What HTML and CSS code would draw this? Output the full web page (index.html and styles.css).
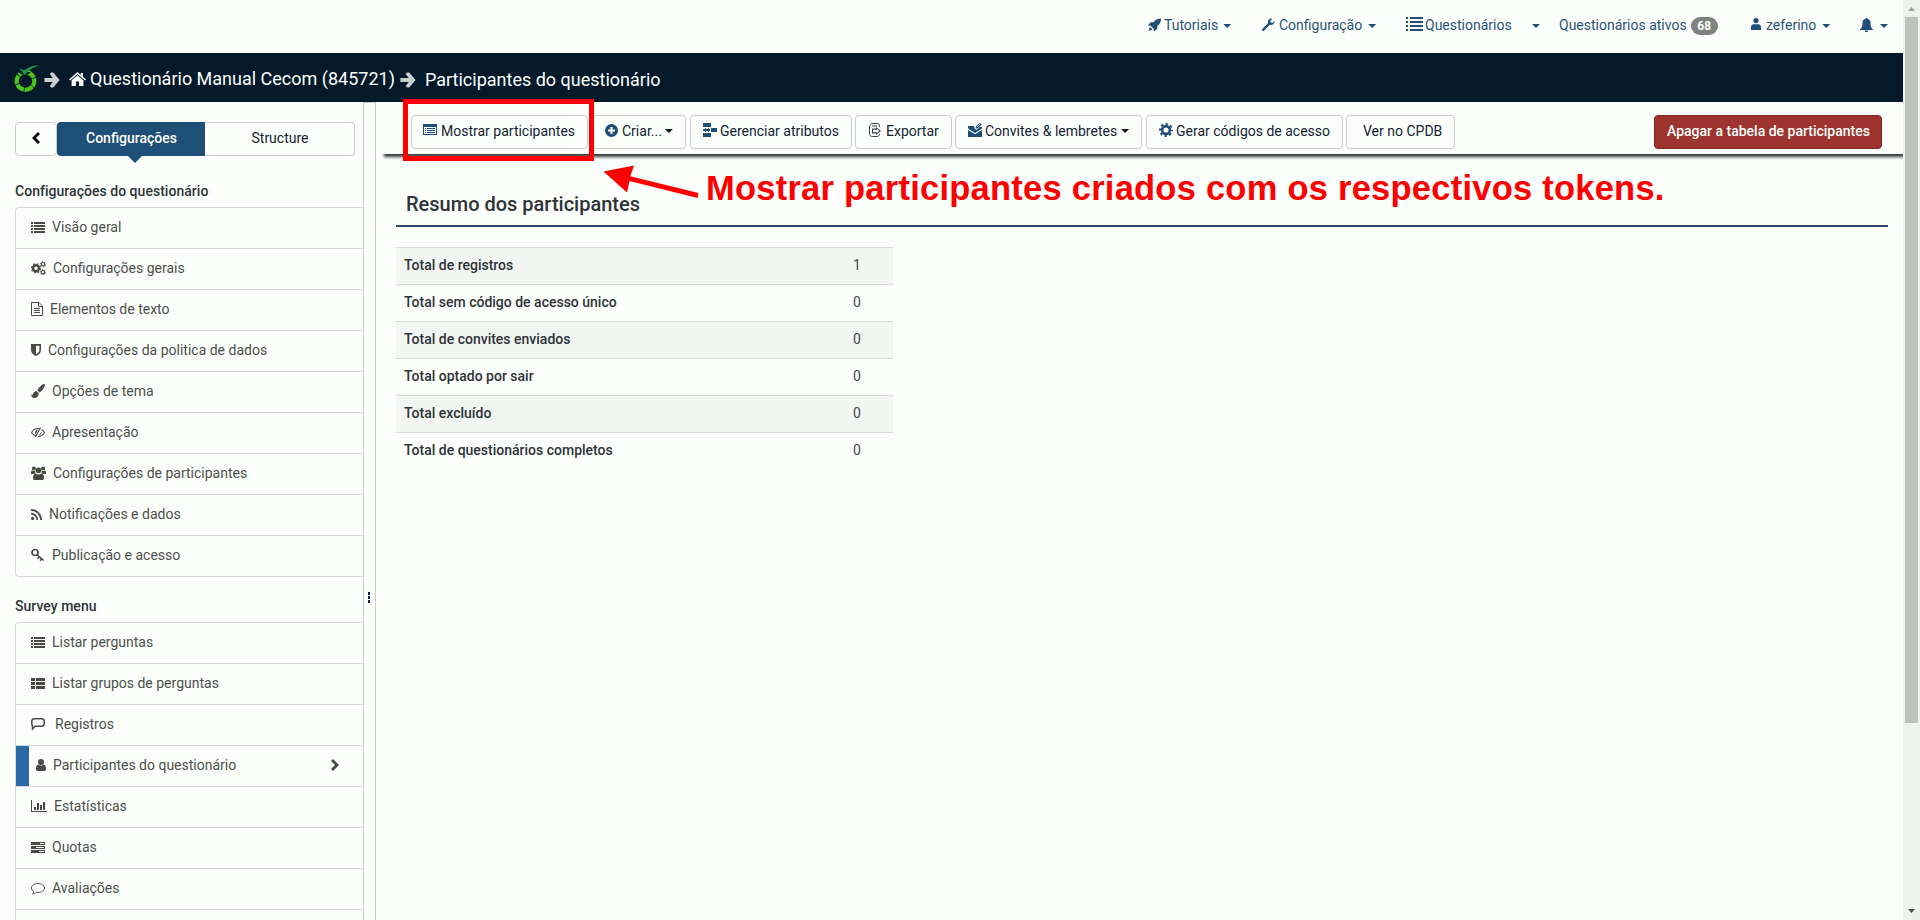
FILE: index.html
```html
<!DOCTYPE html>
<html lang="pt-BR">
<head>
<meta charset="utf-8">
<title>Participantes do questionário</title>
<link rel="stylesheet" href="styles.css">
</head>
<body>
<svg class="sprite" aria-hidden="true">
  <symbol id="rocket" viewBox="0 0 14 14"><path d="M14 0C10 0 8 1.300 6 4H3L0 7.600l2.800.2L6 11l.4 3L10 11V8c2.700-2 4-4 4-8zM2.600 9.500C1.500 10 1 11 .8 13.200c2.200-.2 3.200-.7 3.700-1.800z"/></symbol>
  <symbol id="wrench" viewBox="0 0 14 14"><path d="M13.500 2.600 11.300 4.800 9.300 4.300 8.900 2.500 11.200.3C9.200-.4 7 .8 6.500 2.800c-.2.800-.1 1.400.1 2L.4 11.200c-.5.600-.5 1.400 0 1.900s1.300.5 1.800 0l6.200-6.300c2.700.8 5.500-1.300 5.100-4.200z"/></symbol>
  <symbol id="biglist" viewBox="0 0 17 15"><path d="M0 0h2v2H0zM4 0h13v2H4zM0 4h2v2H0zM4 4h13v2H4zM0 8h2v2H0zM4 8h13v2H4zM0 12h2v2H0zM4 12h13v2H4z"/></symbol>
  <symbol id="person" viewBox="0 0 10 12"><circle cx="5" cy="2.600" r="2.600"/><path d="M0 12V9.200C0 7.400 1 6.200 2.700 6.200h4.600C9 6.200 10 7.400 10 9.200V12z"/></symbol>
  <symbol id="bell" viewBox="0 0 13 14"><path d="M5.500.8a1 1 0 0 1 2 0c2.300.6 3 2.300 3 4.200 0 3.300.6 4.800 2.500 6.500v.6H0v-.6C1.900 9.800 2.500 8.300 2.500 5c0-1.900.7-3.600 3-4.200zM4.700 12.600h3.600a1.800 1.500 0 0 1-3.600 0z"/></symbol>
  <symbol id="arrow" viewBox="0 0 16 16"><path d="M7 .5h2.300L15.600 8l-6.300 7.500H7L5.700 14l3-4H.4V6h8.300l-3-4z"/></symbol>
  <symbol id="home" viewBox="0 0 17 14"><path d="M8.500 0 0 7.400l1 1.100 7.500-6.400L16 8.500l1-1.100-3-2.600V1h-2.200v1.900zM8.500 3.200 2.600 8.300V14h4.300V9.500h3.200V14h4.300V8.300z"/></symbol>
  <symbol id="left" viewBox="0 0 8 12"><path d="M6 0 8 2 4 6l4 4-2 2-6-6z"/></symbol>
  <symbol id="right" viewBox="0 0 8 12"><path d="M2 0 0 2l4 4-4 4 2 2 6-6z"/></symbol>
  <symbol id="list" viewBox="0 0 14 14"><path d="M0 2h2v2H0zM3 2h11v2H3zM0 5h2v2H0zM3 5h11v2H3zM0 8h2v2H0zM3 8h11v2H3zM0 11h2v2H0zM3 11h11v2H3z"/></symbol>
  <symbol id="thlist" viewBox="0 0 14 14"><path d="M0 2h4v3H0zM5 2h9v3H5zM0 6h4v3H0zM5 6h9v3H5zM0 10h4v3H0zM5 10h9v3H5z"/></symbol>
  <symbol id="cogs" viewBox="0 0 15 14"><circle cx="5" cy="7.300" r="3" fill="none" stroke="currentColor" stroke-width="2.400"/><circle cx="5" cy="7.300" r="4.500" fill="none" stroke="currentColor" stroke-width="1.300" stroke-dasharray="1.770"/><circle cx="12" cy="3.200" r="1.700" fill="none" stroke="currentColor" stroke-width="1.200"/><circle cx="12" cy="3.200" r="2.700" fill="none" stroke="currentColor" stroke-width=".8" stroke-dasharray="1.400"/><circle cx="12" cy="11.200" r="1.700" fill="none" stroke="currentColor" stroke-width="1.200"/><circle cx="12" cy="11.200" r="2.700" fill="none" stroke="currentColor" stroke-width=".8" stroke-dasharray="1.400"/></symbol>
  <symbol id="file" viewBox="0 0 12 14"><path d="M.5.500H8L11.500 4v9.500H.5zM7.500.500v4h4M3 6.500h6M3 8.500h6M3 10.500h6" fill="none" stroke="currentColor"/></symbol>
  <symbol id="shield" viewBox="0 0 10 14"><path fill-rule="evenodd" d="M0 1h10v6c0 3-2.500 5-5 6C2.500 12 0 10 0 7zm5 1.700v8.500C7 10.200 8.400 8.700 8.400 7V2.700z"/></symbol>
  <symbol id="brush" viewBox="0 0 14 14"><path d="M12.600.1c.8-.3 1.600.5 1.300 1.300C13 4 11 6.800 8.600 8.500L6.300 6.200C7.900 3.800 10 1.200 12.600.1zM5.500 7l2.300 2.200C7.600 12 6 14 3.500 14 1.500 14 .3 12.500 0 10.500c1.200.8 1.800.5 2.200-.9C2.700 8 4 7 5.500 7z"/></symbol>
  <symbol id="eyeslash" viewBox="0 0 14 14"><path d="M5 11C3 10.500 1.500 9.200.5 7.500 2 5 4.400 3.500 7 3.500c.5 0 1 .1 1.500.2M10.600 4.500c1.200.7 2.200 1.700 2.900 3C12.200 9.800 9.800 11.300 7.200 11.500M9.500 2.500l-5 9.500" fill="none" stroke="currentColor" stroke-width="1.100"/><path d="M7 4.500 4.800 9.500C3.500 8 4 5 7 4.500zM10.500 6.500 7.500 11c2-.5 3.200-2.500 3-4.500z"/></symbol>
  <symbol id="users" viewBox="0 0 15 14"><circle cx="2.900" cy="2.500" r="2"/><circle cx="12.100" cy="2.500" r="2"/><circle cx="7.500" cy="4.300" r="2.900"/><path d="M0 8V6.500c0-1.500.6-2 1.600-2 .9.700 1.700.7 2.500.4C4 6 4.200 6.700 4.600 7.300 3.700 7.300 3 7.600 2.600 8zM15 8V6.500c0-1.500-.6-2-1.600-2-.9.700-1.700.7-2.500.4.100 1.100-.1 1.800-.5 2.400.9 0 1.600.3 2 .7zM2 12.200C2 9 3 7.500 4.700 7.500c1.800 1.400 3.800 1.400 5.600 0C12 7.500 13 9 13 12.200c0 1-.7 1.800-1.800 1.800H3.800C2.700 14 2 13.200 2 12.200z"/></symbol>
  <symbol id="rss" viewBox="0 0 11 14"><circle cx="1.600" cy="11.400" r="1.600"/><path d="M0 6.700A6.300 6.300 0 0 1 6.300 13M0 2.900A10.100 10.100 0 0 1 10.100 13" fill="none" stroke="currentColor" stroke-width="1.700"/></symbol>
  <symbol id="key" viewBox="0 0 14 14"><circle cx="4" cy="4.500" r="3" fill="none" stroke="currentColor" stroke-width="1.700"/><path d="m6 6.500 6.500 6M8 9l-1.600 1.800M10.500 11 9 12.600" fill="none" stroke="currentColor" stroke-width="1.600"/></symbol>
  <symbol id="comment" viewBox="0 0 14 14"><path d="M3.500 1.800h7c1.700 0 2.700 1 2.700 2.500v2.400c0 1.500-1 2.500-2.700 2.500H4.300L1.500 12V8.800C1 8.300.8 7.700.8 6.700V4.300c0-1.500 1-2.500 2.700-2.500z" fill="none" stroke="currentColor" stroke-width="1.500"/></symbol>
  <symbol id="bubble" viewBox="0 0 14 14"><path d="M7 2.500c3.600 0 6.500 2 6.500 4.500s-2.900 4.500-6.500 4.500c-.6 0-1.200 0-1.700-.2C4.300 12.200 3 13 1.700 13c.7-.7 1-1.400 1.100-2.400C1.400 9.800.5 8.500.5 7c0-2.500 2.900-4.500 6.500-4.500z" fill="none" stroke="currentColor"/></symbol>
  <symbol id="user" viewBox="0 0 10 12"><circle cx="5" cy="3" r="3"/><path d="M0 9.800C0 7.400.8 5.600 2.400 5.400c1.600 1.300 3.600 1.300 5.200 0C9.200 5.600 10 7.400 10 9.800c0 1.400-.7 2.200-1.800 2.200H1.800C.7 12 0 11.200 0 9.800z"/></symbol>
  <symbol id="chart" viewBox="0 0 16 14"><path d="M0 1h1v11h15v1H0zM3 8h2v3H3zM6 4h2v7H6zM9 6h2v5H9zM12 3h2v8h-2z"/></symbol>
  <symbol id="server" viewBox="0 0 14 14"><path fill-rule="evenodd" d="M0 2h14v3H0zm9 1v1h4V3zM0 6h14v3H0zm5 1v1h8V7zM0 10h14v3H0zm8 1v1h5v-1z"/></symbol>
  <symbol id="table" viewBox="0 0 14 12"><path fill-rule="evenodd" d="M0 0h14v11H0zm1 3v7h12V3zm1 1h1v1H2zm2 0h8v1H4zM2 6h1v1H2zm2 0h8v1H4zM2 8h1v1H2zm2 0h8v1H4z"/></symbol>
  <symbol id="plus" viewBox="0 0 13 13"><path fill-rule="evenodd" d="M6.500 0a6.500 6.500 0 1 1 0 13 6.500 6.500 0 0 1 0-13zM5.400 3v2.400H3v2.200h2.400V10h2.200V7.600H10V5.400H7.600V3z"/></symbol>
  <symbol id="attrs" viewBox="0 0 14 14"><path d="M0 0h8v4H0zM0 10h8v4H0zM8 5h6v4H8zM2 5h1v1h2V5h1v1h1v2H6v1H5V8H3v1H2V8H0V6h2z"/></symbol>
  <symbol id="export" viewBox="0 0 13 14"><path d="M10.500 4V3c0-1.500-1-2.500-2.500-2.500H4C2 .5.500 2 .5 4v6.500c0 2 1 3 3 3h4.500c1.500 0 2.500-1 2.500-2.500M3 3h5" fill="none" stroke="currentColor"/><path fill-rule="evenodd" d="M3 5.500h4V4l5 4-5 4v-1.500H3zm1 1.300v2.400h4v.8L10.300 8 8 6v.8z"/></symbol>
  <symbol id="mail" viewBox="0 0 14 14"><path d="M0 3h6l1 3.300 1.800.5L11.500 4H14v1.600L7 10 0 5.600zM0 7l7 4.300L14 7v7H0zM7.500 5.600 8 3.500 11.500 0 14 1.300 9.700 5.300z"/><path d="m9 4 3-3" stroke="#fdfffc" stroke-width=".7"/></symbol>
  <symbol id="cog" viewBox="0 0 14 14"><circle cx="7" cy="7" r="3.900" fill="none" stroke="currentColor" stroke-width="2.600"/><circle cx="7" cy="7" r="6" fill="none" stroke="currentColor" stroke-width="1.900" stroke-dasharray="2.356" stroke-dashoffset="1.180"/></symbol>
</svg>

<div class="window">
  <div class="page">
    <nav class="topnav">
      <a class="tutorials"><svg class="w13"><use href="#rocket"/></svg>Tutoriais<i class="caret"></i></a>
      <a><svg class="w13"><use href="#wrench"/></svg>Configuração<i class="caret"></i></a>
      <a class="surveys"><svg><use href="#biglist"/></svg>Questionários</a>
      <a class="lone"><i class="caret"></i></a>
      <a>Questionários ativos<span class="badge">68</span></a>
      <a class="account"><svg><use href="#person"/></svg>zeferino<i class="caret"></i></a>
      <a class="alerts"><svg><use href="#bell"/></svg><i class="caret"></i></a>
    </nav>

    <header class="crumbs">
      <svg class="logo" viewBox="0 0 26 28"><circle cx="11.500" cy="16" r="8.800" fill="none" stroke="#4cc417" stroke-width="4.200" stroke-dasharray="8.500 .715" stroke-dashoffset="3"/><path d="M3 6 5 3l6 4 6 0-3 2.500H8z" fill="#041a2b"/><path d="M4.500 3.500c2.500.2 4 1 5.500 2.500C14 2.500 18 .5 24.500.500 19 2.500 14.500 5 10.500 10 9 7 7.500 5 4.500 3.500z" fill="#1d9a48"/></svg>
      <svg class="arr first"><use href="#arrow"/></svg>
      <svg class="home"><use href="#home"/></svg>
      <span class="survey">Questionário Manual Cecom (845721)</span>
      <svg class="arr second"><use href="#arrow"/></svg>
      <span class="here">Participantes do questionário</span>
    </header>

    <div class="body">
      <aside class="side">
        <div class="tabs">
          <button class="back"><svg><use href="#left"/></svg></button>
          <button class="tab on">Configurações</button>
          <button class="tab off">Structure</button>
        </div>
        <h4>Configurações do questionário</h4>
        <ul class="menu">
          <li><svg class="w14"><use href="#list"/></svg>Visão geral</li>
          <li><svg class="w15"><use href="#cogs"/></svg>Configurações gerais</li>
          <li><svg class="w12"><use href="#file"/></svg>Elementos de texto</li>
          <li><svg class="w10"><use href="#shield"/></svg>Configurações da politica de dados</li>
          <li><svg class="w14"><use href="#brush"/></svg>Opções de tema</li>
          <li><svg class="w14"><use href="#eyeslash"/></svg>Apresentação</li>
          <li><svg class="w15"><use href="#users"/></svg>Configurações de participantes</li>
          <li><svg class="w11"><use href="#rss"/></svg>Notificações e dados</li>
          <li><svg class="w14"><use href="#key"/></svg>Publicação e acesso</li>
        </ul>
        <h4 class="second-title">Survey menu</h4>
        <ul class="menu open">
          <li><svg class="w14"><use href="#list"/></svg>Listar perguntas</li>
          <li><svg class="w14"><use href="#thlist"/></svg>Listar grupos de perguntas</li>
          <li><svg class="w14 wide"><use href="#comment"/></svg>Registros</li>
          <li class="current"><svg class="who"><use href="#user"/></svg>Participantes do questionário<svg class="go"><use href="#right"/></svg></li>
          <li><svg class="w16"><use href="#chart"/></svg>Estatísticas</li>
          <li><svg class="w14"><use href="#server"/></svg>Quotas</li>
          <li><svg class="w14"><use href="#bubble"/></svg>Avaliações</li>
          <li></li>
        </ul>
      </aside>
      <div class="splitter"><i></i><i></i><i></i></div>

      <main>
        <div class="toolbar">
          <button class="b-show"><svg class="s-table"><use href="#table"/></svg>Mostrar participantes</button>
          <button class="b-new"><svg class="s-plus"><use href="#plus"/></svg>Criar...<i class="caret"></i></button>
          <button class="b-attr"><svg><use href="#attrs"/></svg>Gerenciar atributos</button>
          <button class="b-exp"><svg class="s-exp"><use href="#export"/></svg>Exportar</button>
          <button class="b-mail"><svg><use href="#mail"/></svg>Convites &amp; lembretes<i class="caret"></i></button>
          <button class="b-gen"><svg><use href="#cog"/></svg>Gerar códigos de acesso</button>
          <button class="b-cpdb">Ver no CPDB</button>
          <button class="danger">Apagar a tabela de participantes</button>
        </div>
        <h3>Resumo dos participantes</h3>
        <table>
          <tr><th>Total de registros</th><td>1</td></tr>
          <tr><th>Total sem código de acesso único</th><td>0</td></tr>
          <tr><th>Total de convites enviados</th><td>0</td></tr>
          <tr><th>Total optado por sair</th><td>0</td></tr>
          <tr><th>Total excluído</th><td>0</td></tr>
          <tr><th>Total de questionários completos</th><td>0</td></tr>
        </table>
      </main>
    </div>
  </div>
  <div class="scrollbar"><i class="up"></i><div class="thumb"></div><i class="down"></i></div>

  <div class="mark"></div>
  <svg class="pointer" viewBox="0 0 98 34"><path d="M.5 6.500 31 .5l-3.700 10.700L95.500 28l-1 5L26.500 16 24 27.500z" fill="#fe0000"/></svg>
  <div class="note">Mostrar participantes criados com os respectivos tokens.</div>
</div>
</body>
</html>
```

FILE: styles.css
```css
* { box-sizing: border-box; }
body { margin: 0; background: #fdfffc; font: 14px/20px Roboto, "Liberation Sans", sans-serif; color: #2d3338; overflow: hidden; }
svg { fill: currentColor; flex: none; display: block; }
.sprite { position: absolute; width: 0; height: 0; }
button { font: inherit; margin: 0; padding: 0; background: none; }
.window { position: relative; display: flex; width: 1920px; height: 920px; overflow: hidden; }
.page { width: 1903px; height: 920px; overflow: hidden; display: flex; flex-direction: column; }
.caret { display: block; flex: none; width: 8px; height: 4px; background: currentColor; clip-path: polygon(0 0, 100% 0, 50% 100%); }

.topnav { flex: none; height: 53px; padding: 0 0 3px 1148px; display: grid; grid-template-columns: 114px 143px 127px 27px 192px 109px 40px; color: #1f4e79; }
.topnav a { display: flex; align-items: center; white-space: nowrap; color: #2b5276; }
.topnav svg, .topnav .caret { color: #1f4e79; }
.topnav .w13 { width: 13px; height: 14px; margin-right: 4px; }
.topnav .caret { margin: 2px 0 0 6px; }
.topnav .tutorials svg { margin-right: 3px; }
.topnav .tutorials .caret { margin-left: 5px; }
.topnav .surveys svg { width: 17px; height: 15px; margin: -1px 2px 0 1px; }
.topnav .lone .caret { margin-left: 0; }
.badge { background: #80827f; color: #fdfffc; font-size: 12px; font-weight: 700; line-height: 18px; width: 27px; text-align: center; border-radius: 9px; margin: 2px 0 0 4px; }
.topnav .account svg { width: 10px; height: 12px; margin: -2px 5px 0 0; }
.topnav .account .caret { margin-left: 6px; }
.topnav .alerts svg { width: 13px; height: 14px; }
.topnav .alerts .caret { margin-left: 7px; }

.crumbs { flex: none; height: 49px; background: #041a2b; color: #fdfffc; display: flex; align-items: center; font-size: 18px; padding-left: 14px; white-space: nowrap; }
.logo { width: 26px; height: 28px; margin-top: 3px; }
.arr { width: 16px; height: 16px; color: #cbcdca; }
.arr.first { margin: 4px 9px 0 4px; }
.home { width: 17px; height: 14px; margin: 2px 4px 0 0; }
.survey { width: 310px; margin-top: 2px; }
.arr.second { margin: 5px 9px 0 0; }
.here { margin-top: 4px; }

.body { flex: 1; display: flex; min-height: 0; }
.side { width: 363px; flex: none; padding: 20px 0 0 15px; overflow: hidden; }
.tabs { display: flex; height: 34px; width: 340px; }
.back { width: 42px; border: 1px solid #cccecb; border-radius: 4px; display: flex; align-items: center; justify-content: center; color: #000; }
.back svg { width: 8px; height: 12px; margin-top: -2px; }
.tab { border: 0; padding-bottom: 2px; }
.tab.on { width: 148px; background: #1f4e79; color: #fdfffc; font-weight: 500; border-radius: 4px 0 0 4px; position: relative; padding-left: 1px; }
.tab.on::after { content: ""; position: absolute; left: 71px; top: 34px; border: 7.500px solid transparent; border-top-color: #1f4e79; border-bottom: 0; }
.tab.off { flex: 1; border: 1px solid #cccecb; border-left: 0; border-radius: 0 4px 4px 0; color: #122333; padding-left: 1px; }
h4 { margin: 25px 0 6px; font-size: 14px; font-weight: 500; line-height: 20px; color: #2d3338; letter-spacing: .03px; }
.second-title { margin: 19px 0 6px; }
.menu { list-style: none; margin: 0; padding: 0; border: 1px solid #d7d9d6; border-right: 0; border-radius: 4px 0 0 4px; }
.menu li { height: 41px; display: flex; align-items: center; padding: 0 27px 3px 15px; border-bottom: 1px solid #d7d9d6; color: #4c504b; white-space: nowrap; }
.menu li:last-child { border-bottom: 0; height: 40px; }
.menu svg { height: 14px; margin-right: 7px; color: #484b42; }
.w10 { width: 10px; } .w11 { width: 11px; } .w12 { width: 12px; } .w14 { width: 14px; } .w15 { width: 15px; } .w16 { width: 16px; }
.menu .wide { margin-right: 10px; }
.menu .current { padding: 0 27px 3px 0; }
.menu .current::before { content: ""; width: 13px; align-self: stretch; background: #2a69a4; margin: 0 7px -3px 0; }
.menu .who { width: 10px; height: 12px; }
.menu .go { width: 8px; height: 12px; margin: 0 -3px 0 auto; }
.splitter { flex: none; width: 13px; border: 1px solid #cccecb; border-bottom: 0; display: flex; flex-direction: column; gap: 1px; padding: 489px 0 0 4px; }
.splitter i { width: 2px; height: 3px; background: #0b1c58; }

main { flex: 1; min-width: 0; padding: 7px 0 0 5px; overflow: hidden; }
.toolbar { height: 45px; padding: 6px 0 5px 30px; display: flex; margin-right: -8px; background: #fdfffc; box-shadow: 3px 3px 3px #35373a; }
.toolbar button { height: 34px; border: 1px solid #cccecb; border-radius: 4px; display: flex; align-items: center; color: #122333; padding: 0 0 3px 12px; white-space: nowrap; flex: none; }
.toolbar svg { width: 14px; height: 14px; margin: -1px 4px 0 0; color: #1f4e79; }
.toolbar .s-table { height: 12px; }
.toolbar .s-plus, .toolbar .s-exp { width: 13px; }
.toolbar .s-plus { height: 13px; }
.toolbar .s-exp { color: #37434b; }
.toolbar .caret { margin: 1px 0 0 3px; color: #04121f; }
.toolbar .b-show { width: 177px; margin-right: 4px; padding-left: 11px; }
.toolbar .b-new { width: 94px; margin-right: 4px; }
.toolbar .b-attr { width: 162px; margin-right: 3px; }
.toolbar .b-attr svg, .toolbar .b-gen svg { margin-right: 3px; }
.toolbar .b-exp { width: 97px; margin-right: 3px; padding-left: 13px; }
.toolbar .b-mail { width: 187px; margin-right: 4px; }
.toolbar .b-mail svg { margin-right: 3px; }
.toolbar .b-mail .caret { margin-left: 4px; }
.toolbar .b-gen { width: 197px; margin-right: 3px; }
.toolbar .b-cpdb { width: 109px; padding-left: 16px; }
.toolbar .danger { margin: 0 29px 0 auto; width: 228px; background: #9d342f; border-color: #7f2b28; color: #fdfffc; font-weight: 500; padding-left: 12px; }
h3 { margin: 35px 15px 20px 15px; height: 38px; padding: 3px 0 0 10px; border-bottom: 2px solid #2d4a66; font-size: 20px; line-height: 24px; font-weight: 500; }
table { border-collapse: collapse; width: 497px; margin-left: 15px; }
tr { border-top: 1px solid #dadcd9; }
tr:nth-child(odd) { background: #f3f5f2; }
th, td { height: 37px; padding: 0 8px 2px; text-align: left; font-weight: 500; }
td { font-weight: 400; width: 48px; color: #44484b; }

.scrollbar { width: 17px; height: 920px; background: #eff1ee; display: flex; flex-direction: column; align-items: center; padding: 7px 0 7px; }
.thumb { width: 13px; height: 706px; background: #bfc1be; margin-top: 6px; }
.up, .down { width: 7px; height: 4px; background: #9fa19e; clip-path: polygon(50% 0, 100% 100%, 0 100%); }
.down { background: #4d4f4c; clip-path: polygon(0 0, 100% 0, 50% 100%); margin-top: auto; }

.mark { position: absolute; left: 403px; top: 99px; width: 191px; height: 62px; border: 5px solid #fe0000; }
.pointer { position: absolute; left: 603px; top: 165px; width: 98px; height: 34px; }
.note { position: absolute; left: 706px; top: 168px; font: bold 34.500px/40px "Liberation Sans", Arial, sans-serif; color: #fe0000; white-space: nowrap; letter-spacing: .24px; }
```
